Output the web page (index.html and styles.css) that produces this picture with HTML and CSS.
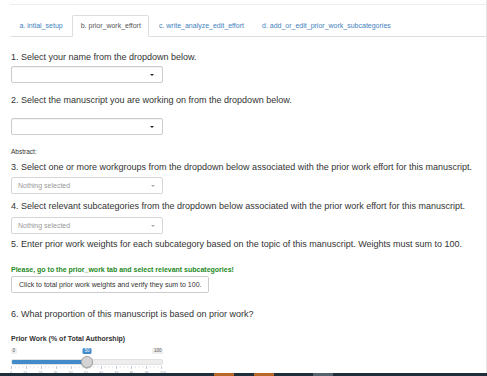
FILE: index.html
```html
<!DOCTYPE html>
<html>
  <head lang="en">
    <meta charset="UTF-8" />
    <title>prior work</title>
    <link rel="stylesheet" href="styles.css">
  </head>

  <body>
    <div class="page">
      <div class="top-line"></div>
      <ul class="nav-tabs">
        <li><a href="javascript:void(0);">a. intial_setup</a></li>
        <li class="active"><a href="javascript:void(0);">b. prior_work_effort</a></li>
        <li><a href="javascript:void(0);">c. write_analyze_edit_effort</a></li>
        <li><a href="javascript:void(0);">d. add_or_edit_prior_work_subcategories</a></li>
      </ul>

      <div class="tab-pane">
        <h4 class="q q1">1. Select your name from the dropdown below.</h4>
        <div class="select-box"><span class="caret"></span></div>

        <h4 class="q q2">2. Select the manuscript you are working on from the dropdown below.</h4>
        <div class="select-box"><span class="caret"></span></div>

        <div class="abstract">Abstract:</div>

        <h4 class="q q3">3. Select one or more workgroups from the dropdown below associated with the prior work effort for this manuscript.</h4>
        <div class="select-box picker">
          <span class="placeholder">Nothing selected</span><span class="caret"></span>
        </div>

        <h4 class="q q4">4. Select relevant subcategories from the dropdown below associated with the prior work effort for this manuscript.</h4>
        <div class="select-box picker">
          <span class="placeholder">Nothing selected</span><span class="caret"></span>
        </div>

        <h4 class="q q5">5. Enter prior work weights for each subcategory based on the topic of this manuscript. Weights must sum to 100.</h4>
        <div class="warn">Please, go to the prior_work tab and select relevant subcategories!</div>
        <button class="btn">Click to total prior work weights and verify they sum to 100.</button>

        <h4 class="q q6">6. What proportion of this manuscript is based on prior work?</h4>
        <label class="slider-label">Prior Work (% of Total Authorship)</label>
        <div class="slider">
          <div class="slider-ends">
            <span class="end">0</span>
            <span class="end">100</span>
          </div>
          <span class="slider-value" style="left: 50%">50</span>
          <div class="track">
            <div class="fill" style="width: 50%"></div>
          </div>
          <div class="grid">
            <div class="ticks"></div>
            <div class="grid-labels">
              <span>0</span><span>10</span><span>20</span><span>30</span><span>40</span><span>50</span>
              <span>60</span><span>70</span><span>80</span><span>90</span><span>100</span>
            </div>
          </div>
          <span class="handle" style="left: 50%"></span>
        </div>
      </div>
    </div>

    <div class="taskbar">
      <span class="task orange t1"></span>
      <span class="task orange t2"></span>
      <span class="task grey t3"></span>
    </div>
  </body>
</html>
```

FILE: styles.css
```css
html,
body {
  margin: 0px;
  padding: 0px;
}

body {
  font-family: "Liberation Sans", Arial, sans-serif;
  font-size: 7px;
  line-height: 10px;
  color: #333333;
  background: #ffffff;
}

ul,
li,
h4,
div,
label {
  margin: 0px;
  padding: 0px;
}

.page {
  min-height: 100vh;
  box-sizing: border-box;
  border-right: #e6e6e6 solid 1px;
  padding-left: 11px;
}

.top-line {
  height: 4px;
  margin-left: -1px;
  border-bottom: #eeeeee solid 1px;
}

.nav-tabs {
  list-style: none;
  display: flex;
  margin-top: 10px;
  margin-left: 0px;
  border-bottom: #dddddd solid 1px;
}

.nav-tabs li {
  margin-right: 1px;
  margin-bottom: -1px;
}

.nav-tabs a {
  display: block;
  padding: 5px 7.5px;
  line-height: 10px;
  border: transparent solid 1px;
  border-radius: 2px 2px 0 0;
  color: #3f82be;
  text-decoration: none;
}

.nav-tabs li.active a {
  color: #555555;
  background: #ffffff;
  border-color: #dddddd;
  border-bottom-color: transparent;
}

.tab-pane {
  display: flex;
  flex-direction: column;
  align-items: flex-start;
  padding-top: 15px;
}

.q {
  font-size: 9px;
  font-weight: normal;
  line-height: 10px;
  white-space: nowrap;
}

.q1 {
  margin-bottom: 4px;
}

.q2 {
  margin-top: 12px;
  margin-bottom: 13px;
}

.q3 {
  margin-top: 5px;
  margin-bottom: 5px;
}

.q4 {
  margin-top: 7px;
  margin-bottom: 6px;
}

.q5 {
  margin-top: 5px;
}

.q6 {
  margin-top: 16px;
}

.select-box {
  width: 152px;
  height: 17px;
  box-sizing: border-box;
  border: #cccccc solid 1px;
  border-radius: 2px;
  box-shadow: inset 0 1px 1px rgba(0, 0, 0, 0.06);
  display: flex;
  align-items: center;
  justify-content: space-between;
  padding: 0 8px 0 6px;
}

.select-box .caret {
  margin-left: auto;
  width: 0;
  height: 0;
  border-left: 2px solid transparent;
  border-right: 2px solid transparent;
  border-top: 2.5px solid #222222;
}

.select-box.picker {
  box-shadow: none;
  border-color: #d6d6d6;
}

.select-box.picker .caret {
  border-top-color: #aaaaaa;
  margin-right: -1px;
}

.placeholder {
  color: #999999;
}

.abstract {
  margin-top: 12px;
  font-size: 6.5px;
}

.warn {
  margin-top: 16px;
  font-weight: bold;
  color: #1e8a1e;
  white-space: nowrap;
}

.btn {
  margin-top: 1px;
  height: 17px;
  padding: 0 7px;
  font-family: "Liberation Sans", Arial, sans-serif;
  font-size: 7px;
  color: #333333;
  background: #ffffff;
  border: #cccccc solid 1px;
  border-radius: 2px;
  white-space: nowrap;
}

.slider-label {
  margin-top: 15px;
  font-weight: bold;
}

.slider {
  position: relative;
  width: 152px;
  margin-top: 4px;
}

.slider-ends {
  display: flex;
  justify-content: space-between;
  font-size: 4.5px;
  line-height: 6px;
}

.end {
  background: #eeeeee;
  color: #555555;
  padding: 0 1.5px;
  border-radius: 1.5px;
}

.slider-value {
  position: absolute;
  top: 0px;
  transform: translateX(-50%);
  background: #428bca;
  color: #ffffff;
  font-size: 4.5px;
  line-height: 6px;
  padding: 0 2px;
  border-radius: 1.5px;
}

.track {
  margin-top: 5px;
  height: 4px;
  border-radius: 2px;
  background: #ededed;
  border: #e2e2e2 solid 0.5px;
  overflow: hidden;
}

.fill {
  height: 100%;
  background: #428bca;
}

.handle {
  position: absolute;
  z-index: 2;
  top: 8px;
  width: 12px;
  height: 12px;
  margin-left: -6px;
  box-sizing: border-box;
  border-radius: 50%;
  background: #d4d4d4;
  border: #a8a8a8 solid 1px;
  box-shadow: 0 0.5px 1px rgba(0, 0, 0, 0.3);
}

.grid {
  margin-top: 1px;
}

.ticks {
  height: 3px;
  background-image:
    linear-gradient(to right, #bccbdb 1px, transparent 1px),
    linear-gradient(to right, #e0e7ee 1px, transparent 1px);
  background-size: 15px 3px, 3.75px 1.5px;
  background-repeat: repeat-x;
  background-position: 0 0, 0 0;
  margin-right: -1px;
}

.grid-labels {
  display: flex;
  justify-content: space-between;
  margin: 2px -3px 0 -1px;
  font-size: 3.5px;
  line-height: 4px;
  color: #999999;
}

.taskbar {
  position: fixed;
  left: 0px;
  right: 0px;
  bottom: 0px;
  height: 3px;
  background: #1f2e3b;
}

.task {
  position: absolute;
  top: 0px;
  width: 20px;
  height: 3px;
}

.task.orange {
  background: #b8692a;
}

.task.grey {
  background: #56636e;
}

.t1 {
  left: 214px;
}

.t2 {
  left: 254px;
}

.t3 {
  left: 313px;
}
```
